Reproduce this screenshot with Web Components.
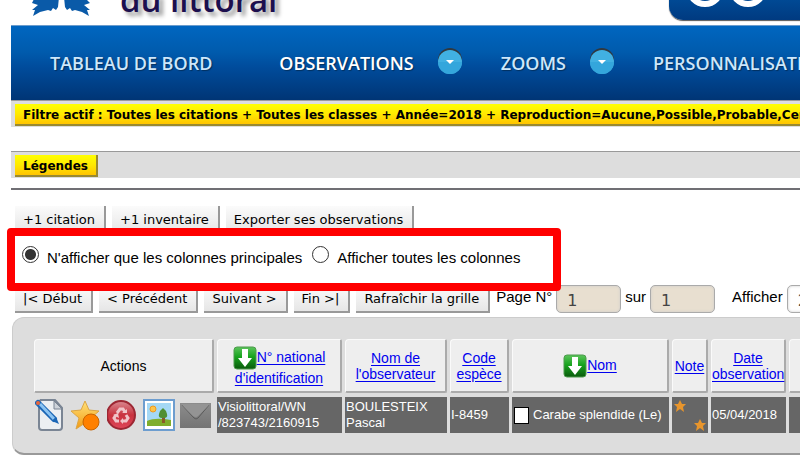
<!DOCTYPE html>
<html lang="fr">
<head>
<meta charset="utf-8">
<title>Visiolittoral - Observations</title>
<style>
  body {
    margin: 0;
    overflow-x: hidden;
    background: white;
    color: black;
    font-family: "Liberation Sans", Arial, sans-serif;
    font-size: 15px;
  }
  main {
    min-width: 960px;
    box-sizing: border-box;
    padding-left: 11px;
  }
  .legend { margin-top: 24px; }
  hr {
    margin: 10px 0 16px;
    border: 0;
    border-top: 2px solid #706f74;
  }
</style>
</head>
<body>
<main>
  <site-header>du littoral</site-header>

  <main-nav>
    <nav-item>TABLEAU DE BORD</nav-item>
    <nav-item current menu>OBSERVATIONS</nav-item>
    <nav-item menu>ZOOMS</nav-item>
    <nav-item>PERSONNALISATION</nav-item>
  </main-nav>

  <info-bar>Filtre actif : Toutes les citations + Toutes les classes + Année=2018 + Reproduction=Aucune,Possible,Probable,Certaine</info-bar>
  <info-bar class="legend">Légendes</info-bar>
  <hr>

  <tool-row>
    <tool-button>+1 citation</tool-button>
    <tool-button>+1 inventaire</tool-button>
    <tool-button>Exporter ses observations</tool-button>
  </tool-row>

  <column-choice></column-choice>

  <tool-row>
    <tool-button>|&lt; Début</tool-button>
    <tool-button>&lt; Précédent</tool-button>
    <tool-button>Suivant &gt;</tool-button>
    <tool-button>Fin &gt;|</tool-button>
    <tool-button>Rafraîchir la grille</tool-button>
    <page-fields></page-fields>
  </tool-row>

  <observation-grid></observation-grid>
</main>

<script>
// Attach an open shadow root and fill it
function fillShadow(element, html) {
  element.attachShadow({ mode: 'open' });
  element.shadowRoot.innerHTML = html;
}

// Top strip: end of the logo, site name and the blue tab on the right
class SiteHeader extends HTMLElement {
  constructor() {
    super();
    fillShadow(this, `
      <style>
        :host {
          display: flex;
          justify-content: space-between;
          align-items: flex-end;
          height: 25px;
          overflow: hidden;
        }
        .brand {
          display: flex;
          align-items: flex-end;
          gap: 28px;
          padding-left: 20px;
        }
        .name {
          font: 600 33px/36px "Open Sans", "Noto Sans", sans-serif;
          color: #1c0f4e;
          text-shadow: 4px 4px 4px #999;
          margin-bottom: 7px;
        }
        .leaf { margin-bottom: 8px; }
        .tab {
          width: 291px;
          height: 40px;
          margin-bottom: 5px;
          background: linear-gradient(#0058a8, #003a80);
          border-radius: 0 0 0 14px;
          box-shadow: 0 1px 1px #555;
        }
        .tab svg { display: block; }
      </style>
      <div class="brand">
        <svg class="leaf" width="61" height="20" viewBox="0 0 61 20" fill="#0a5aa8">
          <path d="M4 0H28L27 10L25 13L22 11L20 14L17 13L9 15L2 19L4 13L1 13L7 8L1 6Z"/>
          <path d="M33 0H53L59 6L53 8L59 13L56 13L58 19L51 15L44 13L41 14L39 11L36 13L34 10Z"/>
        </svg>
        <span class="name"><slot></slot></span>
      </div>
      <div class="tab">
        <svg width="131" height="40" fill="none" stroke="white" stroke-width="6">
          <circle cx="36" cy="8" r="16"/>
          <circle cx="79" cy="8" r="16"/>
        </svg>
      </div>
    `);
  }
}
customElements.define('site-header', SiteHeader);

// Blue menu bar
class MainNav extends HTMLElement {
  constructor() {
    super();
    fillShadow(this, `
      <style>
        :host { display: block; }
        nav {
          display: flex;
          align-items: center;
          height: 74px;
          border-top: 1px solid #6b9ccc;
          background: linear-gradient(#0066c0, #005bad 35%, #004c9c 55%, #003575);
        }
      </style>
      <nav><slot></slot></nav>
    `);
  }
}
customElements.define('main-nav', MainNav);

// One menu entry, "menu" adds the round arrow
class NavItem extends HTMLElement {
  constructor() {
    super();
    const arrow = this.hasAttribute('menu') ? `
      <svg width="24" height="26" viewBox="0 0 24 26">
        <circle cx="12" cy="12" r="12" fill="#30383f"/>
        <circle cx="12" cy="14" r="12" fill="#41b0e2"/>
        <path d="M0 14a12 12 0 0 0 24 0z" fill="#34a6dc"/>
        <path d="M8 12h8l-4 4z" fill="white"/>
      </svg>` : '';

    fillShadow(this, `
      <style>
        :host {
          display: flex;
          align-items: center;
          gap: 24px;
          padding: 0 28px 0 39px;
        }
        :host([menu]) { padding-right: 0; }
        a {
          font: 600 18px/24px "Open Sans", "Noto Sans", sans-serif;
          color: #cde7fb;
          text-decoration: none;
          text-shadow: 1px 1px 1px #00305f;
        }
        :host([current]) a { color: white; }
        svg { margin-bottom: 4px; }
      </style>
      <a href="#"><slot></slot></a>
      ${arrow}
    `);
  }
}
customElements.define('nav-item', NavItem);

// Grey strip holding a yellow button
class InfoBar extends HTMLElement {
  constructor() {
    super();
    fillShadow(this, `
      <style>
        :host {
          display: block;
          overflow: hidden;
          height: 23px;
          padding: 3px 0 0 4px;
          background: #ddd;
          border-top: 1px solid #999;
        }
        button {
          display: block;
          height: 22px;
          padding: 1px 8px 0;
          border: 0;
          border-right: 2px solid #998a30;
          border-bottom: 2px solid #998a30;
          background: linear-gradient(#ffff00, #ffe900 50%, #ffc400);
          color: black;
          font: bold 12px/18px "DejaVu Sans", Verdana, sans-serif;
          white-space: nowrap;
        }
      </style>
      <button type="button"><slot></slot></button>
    `);
  }
}
customElements.define('info-bar', InfoBar);

// Row of buttons and fields
class ToolRow extends HTMLElement {
  constructor() {
    super();
    fillShadow(this, `
      <style>
        :host {
          display: flex;
          align-items: center;
          gap: 6px;
          height: 28px;
          padding-left: 4px;
        }
      </style>
      <slot></slot>
    `);
  }
}
customElements.define('tool-row', ToolRow);

class ToolButton extends HTMLElement {
  constructor() {
    super();
    fillShadow(this, `
      <style>
        :host { display: block; }
        button {
          display: block;
          height: 28px;
          padding: 2px 9px 0 8px;
          border: 0;
          border-right: 2px solid #999;
          border-bottom: 2px solid #999;
          background: linear-gradient(#fbfbfb, #e6e6e6);
          color: black;
          font: 13px/24px "DejaVu Sans", Verdana, sans-serif;
          white-space: nowrap;
        }
      </style>
      <button type="button"><slot></slot></button>
    `);
  }
}
customElements.define('tool-button', ToolButton);

// Red frame with the two column modes, overlaps the rows above and below
class ColumnChoice extends HTMLElement {
  constructor() {
    super();
    fillShadow(this, `
      <style>
        :host {
          display: flex;
          align-items: center;
          position: relative;
          z-index: 1;
          box-sizing: border-box;
          width: fit-content;
          height: 63px;
          margin: -6px 0 -6px -4px;
          padding: 0 33px 6px 7px;
          border: 8px solid red;
          border-radius: 4px;
          background: white;
        }
        form {
          display: flex;
          gap: 10px;
        }
        label {
          display: flex;
          align-items: baseline;
          gap: 8px;
          line-height: 18px;
        }
        input {
          appearance: none;
          width: 17px;
          height: 17px;
          margin: 0;
          border: 1px solid #333;
          border-radius: 50%;
        }
        input:checked {
          background: radial-gradient(circle, #333 5px, white 6px);
        }
      </style>
      <form>
        <label><input type="radio" name="columns" checked>N'afficher que les colonnes principales</label>
        <label><input type="radio" name="columns">Afficher toutes les colonnes</label>
      </form>
    `);
  }
}
customElements.define('column-choice', ColumnChoice);

// Page number, page count and rows per page
class PageFields extends HTMLElement {
  constructor() {
    super();
    fillShadow(this, `
      <style>
        :host {
          display: flex;
          gap: 17px;
        }
        div, label {
          display: flex;
          align-items: flex-start;
          gap: 4px;
          white-space: nowrap;
          line-height: 24px;
        }
        input {
          box-sizing: border-box;
          width: 65px;
          height: 28px;
          margin: 0;
          padding: 2px 10px 0;
          border: 1px solid #aaa;
          border-radius: 5px;
          background: #e8dfd0;
          box-shadow: inset 0 0 3px #ccc;
          color: #444;
          font: 16px/24px "DejaVu Sans", Verdana, sans-serif;
        }
        input.rows { background: white; }
      </style>
      <div>
        <label>Page N° <input value="1" readonly></label>
        <label>sur <input value="1" readonly></label>
      </div>
      <label>Afficher <input class="rows" value="20"></label>
    `);
  }
}
customElements.define('page-fields', PageFields);

// Link of a column header, "sorted" shows the green arrow before it
class SortLink extends HTMLElement {
  constructor() {
    super();
    const icon = this.hasAttribute('sorted') ? `<svg width="24" height="24" viewBox="0 0 24 24">
        <defs><linearGradient id="g" x1="0" y1="0" x2="0" y2="1">
          <stop offset="0" stop-color="#5bc45b"/><stop offset=".45" stop-color="#17a31d"/><stop offset="1" stop-color="#0a5a0c"/>
        </linearGradient></defs>
        <rect x="1" y="1" width="22" height="22" rx="3" fill="url(#g)" stroke="#4c9a4c"/>
        <path d="M9 3h6v9h4l-7 9l-7-9h4z" fill="white"/>
      </svg>` : '';

    fillShadow(this, `
      <style>
        :host { display: inline; }
        a {
          color: #0000ee;
          text-decoration: underline;
          text-underline-offset: 2px;
        }
        svg { vertical-align: -8px; }
      </style>${icon}<a href="#"><slot></slot></a>`);
  }
}
customElements.define('sort-link', SortLink);

// Rounded grey panel with the table of observations
class ObservationGrid extends HTMLElement {
  constructor() {
    super();
    fillShadow(this, `
      <style>
        :host {
          display: block;
          margin: 4px 0 0 1px;
          padding: 17px 18px 16px;
          border: 1px solid #ccc;
          border-bottom: 2px solid #999;
          border-radius: 12px;
          background: #ddd;
        }
        table {
          width: 859px;
          table-layout: fixed;
          border-spacing: 3px 4px;
          font-size: 14px;
          line-height: 16px;
        }
        th {
          box-sizing: border-box;
          height: 54px;
          padding: 0;
          border: 2px solid;
          border-color: #fafafa #aaa #aaa #fafafa;
          border-width: 1px 2px 2px 1px;
          border-radius: 4px 2px 2px 2px;
          background: #eee;
          font-weight: normal;
        }
        td {
          box-sizing: border-box;
          height: 36px;
          padding: 0 1px;
          background: #666;
          color: white;
          font-size: 13px;
          white-space: nowrap;
        }
        td.actions { background: none; }
        .icons {
          display: flex;
          gap: 4px;
        }
        .icons button {
          width: 32px;
          height: 32px;
          padding: 0;
          border: 0;
          background: none;
        }
        .icons svg { display: block; }
        .species {
          display: flex;
          align-items: center;
          gap: 4px;
        }
        .swatch {
          flex: none;
          width: 13px;
          height: 15px;
          margin-left: 1px;
          border: 1px solid black;
          background: white;
        }
        .note {
          display: flex;
          justify-content: space-between;
        }
        .note svg:last-child { margin-top: 19px; }
      </style>
      <table>
        <colgroup>
          <col style="width: 180px"><col style="width: 125px"><col style="width: 102px"><col style="width: 59px">
          <col style="width: 157px"><col style="width: 36px"><col style="width: 75px"><col>
        </colgroup>
        <thead>
          <tr>
            <th>Actions</th>
            <th><sort-link sorted>N° national d'identification</sort-link></th>
            <th><sort-link>Nom de l'observateur</sort-link></th>
            <th><sort-link>Code espèce</sort-link></th>
            <th><sort-link sorted>Nom</sort-link></th>
            <th><sort-link>Note</sort-link></th>
            <th><sort-link>Date observation</sort-link></th>
            <th><sort-link>Heure observation</sort-link></th>
          </tr>
        </thead>
        <tbody>
          <tr>
            <td class="actions">
              <div class="icons">
                <button type="button" aria-label="Modifier"><svg width="32" height="32" viewBox="0 0 32 32">
                  <path d="M5 1h15l7 8v19q0 3-3 3H7q-3 0-3-3V4q0-3 3-3z" fill="#eceff2" stroke="#7a8594" stroke-width="2"/>
                  <path d="M19 2v8h8z" fill="#cdd3da" stroke="#7a8594"/>
                  <path d="M3 4L19 20" stroke="#1b66b5" stroke-width="6" stroke-linecap="round"/>
                  <path d="M5 5L19 20" stroke="#8cc4f2" stroke-width="3"/>
                  <path d="M17 22l4-4l3 7z" fill="#1b66b5"/>
                  <circle cx="3" cy="4" r="2" fill="#e8663a"/>
                </svg></button>
                <button type="button" aria-label="Noter"><svg width="32" height="32" viewBox="0 0 32 32">
                  <defs><linearGradient id="s" x1="0" y1="0" x2="0" y2="1">
                    <stop offset="0" stop-color="#ffe27a"/><stop offset="1" stop-color="#f39a12"/>
                  </linearGradient></defs>
                  <path d="M14 2l4 9l10 1l-8 7l3 11l-9-6l-9 6l3-11l-8-7l10-1z" fill="url(#s)" stroke="#dca544"/>
                  <circle cx="20" cy="23" r="8" fill="#ff8000" stroke="#c86400"/>
                </svg></button>
                <button type="button" aria-label="Supprimer"><svg width="32" height="32" viewBox="0 0 32 32">
                  <defs><linearGradient id="r" x1="0" y1="0" x2="0" y2="1">
                    <stop offset="0" stop-color="#d98a92"/><stop offset=".5" stop-color="#c9323f"/><stop offset="1" stop-color="#e0475a"/>
                  </linearGradient></defs>
                  <circle cx="14" cy="16" r="14" fill="url(#r)" stroke="#9c2733" stroke-width="2"/>
                  <g fill="none" stroke="#f0c4c9" stroke-width="3">
                    <path d="M10 14l3-4h3l2 3"/>
                    <path d="M19 16l2 3l-2 3h-3"/>
                    <path d="M12 22H9l-2-3l2-3"/>
                  </g>
                  <path d="M15 14h5v-4zM16 19v6l-3-3zM6 16l5-2l1 5z" fill="#f0c4c9"/>
                </svg></button>
                <button type="button" aria-label="Photos"><svg width="32" height="32" viewBox="0 0 32 32">
                  <rect x="1" y="1" width="30" height="30" fill="white" stroke="#6d9dcf" stroke-width="2"/>
                  <rect x="4" y="4" width="24" height="23" fill="#a4d8f5"/>
                  <path d="M4 22q8-4 24-1v6H4z" fill="#7fae2c"/>
                  <circle cx="10" cy="10" r="3" fill="#fcc44a" stroke="#f09a1a"/>
                  <path d="M19 16h3v8h-3z" fill="#8a5a28"/>
                  <path d="M20 9q3 2 4 6q1 4-3 4h-2q-4 0-3-4q1-4 4-6z" fill="#4f8f32"/>
                </svg></button>
                <button type="button" aria-label="Message"><svg width="32" height="32" viewBox="0 0 32 32">
                  <defs><linearGradient id="m" x1="0" y1="0" x2="0" y2="1">
                    <stop offset="0" stop-color="#8c8c8c"/><stop offset="1" stop-color="#747474"/>
                  </linearGradient></defs>
                  <rect x="1" y="4" width="31" height="25" fill="url(#m)"/>
                  <path d="M3 6l12 13q2 2 4 0L30 6" fill="none" stroke="#5a5a5a"/>
                  <path d="M2 5l12 12q3 2 5 0L31 5z" fill="#949494"/>
                </svg></button>
              </div>
            </td>
            <td>Visiolittoral/WN<br>/823743/2160915</td>
            <td>BOULESTEIX<br>Pascal</td>
            <td>I-8459</td>
            <td><div class="species"><span class="swatch"></span>Carabe splendide (Le)</div></td>
            <td>
              <div class="note">
                <svg width="14" height="12" viewBox="0 0 14 12"><path d="M7 0l2 4h4l-3 3l1 5l-4-3l-4 3l1-5l-3-3h4z" fill="#e8952c"/></svg>
                <svg width="14" height="12" viewBox="0 0 14 12"><path d="M7 0l2 4h4l-3 3l1 5l-4-3l-4 3l1-5l-3-3h4z" fill="#e8952c"/></svg>
              </div>
            </td>
            <td>05/04/2018</td>
            <td></td>
          </tr>
        </tbody>
      </table>
    `);
  }
}
customElements.define('observation-grid', ObservationGrid);
</script>
</body>
</html>
